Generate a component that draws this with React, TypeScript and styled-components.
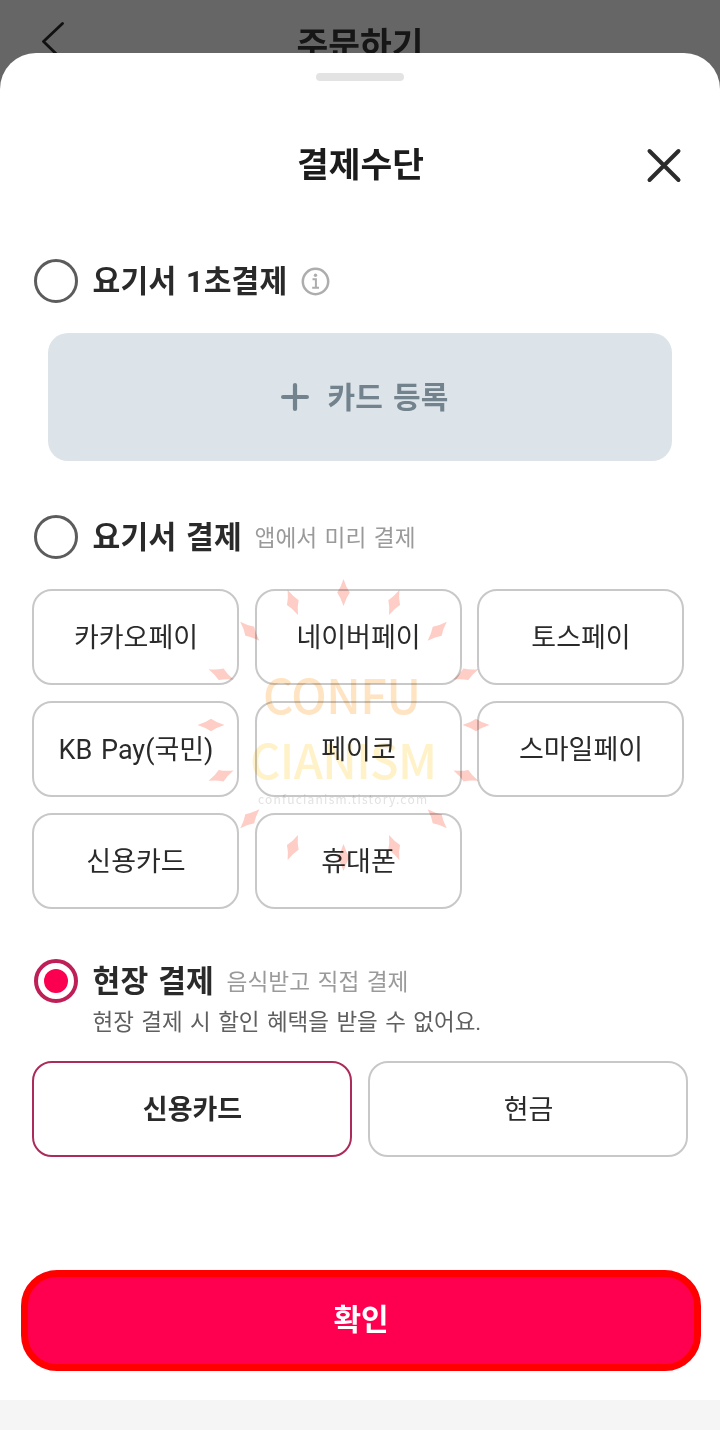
import React, { useState } from "react";
import styled, { createGlobalStyle } from "styled-components";

const GlobalStyle = createGlobalStyle`
  *, *::before, *::after { box-sizing: border-box; }
  body {
    margin: 0;
    background: #666666;
    font-family: Roboto, "Noto Sans CJK KR", sans-serif;
    color: #2a2a2a;
  }
  button { font: inherit; color: inherit; cursor: pointer; padding: 0; }
`;

const Screen = styled.div`
  width: 720px;
  height: 1430px;
  display: flex;
  flex-direction: column;
  overflow: hidden;
  background: #666666;
`;

const PageHeader = styled.header`
  display: grid;
  grid-template-columns: 80px 1fr 80px;
  height: 53px;
  flex: none;
  overflow: hidden;
`;

const BackButton = styled.button`
  border: 0;
  background: none;
  display: flex;
  align-items: flex-start;
  padding: 20px 0 0 38px;
`;

const PageTitle = styled.h1`
  margin: 0;
  padding-top: 20px;
  text-align: center;
  font-size: 34.5px;
  line-height: 50px;
  font-weight: 700;
  color: #161616;
`;

const Sheet = styled.section`
  flex: 1;
  display: flex;
  flex-direction: column;
  background: #ffffff;
  border-radius: 36px 36px 0 0;
`;

const Handle = styled.div`
  width: 88px;
  height: 8px;
  margin: 20px auto 0;
  border-radius: 4px;
  background: #e3e3e3;
`;

const SheetHeader = styled.div`
  display: grid;
  grid-template-columns: 80px 1fr 80px;
  align-items: center;
  height: 60px;
  margin-top: 54px;
`;

const SheetTitle = styled.h2`
  grid-column: 2;
  margin: 0;
  padding: 0 0 1px 1px;
  text-align: center;
  font-size: 34.5px;
  line-height: 50px;
  font-weight: 700;
  color: #1c1c1c;
`;

const CloseButton = styled.button`
  border: 0;
  background: none;
  display: flex;
  padding-left: 4px;
`;

const MethodRow = styled.div<{ $top: number }>`
  display: flex;
  align-items: center;
  height: 44px;
  margin: ${(p) => p.$top}px 34px 0;
`;

const Radio = styled.button<{ $checked?: boolean }>`
  flex: none;
  width: 44px;
  height: 44px;
  border-radius: 50%;
  border: ${(p) => (p.$checked ? "4.5px solid #bd1f56" : "3px solid #5c5c5c")};
  background: #ffffff;
  display: grid;
  place-items: center;

  &::after {
    content: "";
    width: 24px;
    height: 24px;
    border-radius: 50%;
    background: ${(p) => (p.$checked ? "#fb0050" : "transparent")};
  }
`;

const MethodName = styled.h3`
  margin: 0 0 0 14.5px;
  padding-top: 1px;
  font-size: 30.2px;
  line-height: 44px;
  font-weight: 700;
  letter-spacing: 0.2px;
  word-spacing: 2px;
  white-space: nowrap;
`;

const MethodHint = styled.span`
  margin-left: 12.5px;
  padding-top: 3px;
  font-size: 22.7px;
  line-height: 34px;
  word-spacing: 1.8px;
  color: #9a9a9a;
  white-space: nowrap;
`;

const InfoIcon = styled.svg`
  margin-left: 13px;
  margin-top: 1px;
`;

const Notice = styled.p`
  margin: 1px 0 0 92.5px;
  font-size: 22.5px;
  line-height: 36px;
  height: 34px;
  word-spacing: 1.8px;
  color: #5f5f5f;
`;

const AddCard = styled.button`
  flex: none;
  display: flex;
  align-items: center;
  justify-content: center;
  gap: 18px;
  height: 128px;
  margin: 30px 48px 0;
  padding-left: 10px;
  border: 0;
  border-radius: 20px;
  background: #dce3e9;
  color: #73838d;
  font-size: 30px;
  font-weight: 700;
  letter-spacing: 0.2px;
  word-spacing: 2.2px;
`;

const AddCardLabel = styled.span`
  padding-bottom: 4px;
`;

const PayArea = styled.div`
  position: relative;
  margin: 30px 36px 0 32px;
`;

const PayGrid = styled.div`
  display: grid;
  grid-template-columns: repeat(3, 207px);
  column-gap: 15.5px;
  row-gap: 16px;
`;

const SiteGrid = styled.div`
  display: grid;
  grid-template-columns: 1fr 1fr;
  gap: 16px;
  margin: 23px 32px 0;
`;

const Option = styled.button<{ $selected?: boolean }>`
  height: 96px;
  padding: 0 0 4px 1px;
  border: 2px solid ${(p) => (p.$selected ? "#ab2b5b" : "#c8c8c8")};
  border-radius: 20px;
  background: #ffffff;
  font-size: 27px;
  font-weight: ${(p) => (p.$selected ? 700 : 400)};
  word-spacing: 2px;
  white-space: nowrap;
`;

const Watermark = styled.svg`
  position: absolute;
  left: 160px;
  top: -14px;
  pointer-events: none;
  mix-blend-mode: multiply;
  font-family: "Noto Sans CJK KR", sans-serif;
`;

const Confirm = styled.button`
  flex: none;
  height: 101px;
  margin: 113px 19px 0 21px;
  padding-bottom: 8px;
  border: 7px solid #fe0000;
  border-radius: 36px;
  background: #ff0050;
  color: #ffffff;
  font-size: 30px;
  font-weight: 700;
`;

const NavBar = styled.div`
  height: 30px;
  margin-top: auto;
  background: #f5f5f5;
`;

const prepaid = ["카카오페이", "네이버페이", "토스페이", "KB Pay(국민)", "페이코", "스마일페이", "신용카드", "휴대폰"];
const onSite = ["신용카드", "현금"];
const rays = Array.from({ length: 16 }, (_, i) => i * 22.5);

export default function App() {
  const [method, setMethod] = useState(2);
  const [site, setSite] = useState("신용카드");

  return (
    <>
      <GlobalStyle />
      <Screen>
        <PageHeader>
          <BackButton aria-label="뒤로">
            <svg width="30" height="44" fill="none" stroke="#111" strokeWidth="2.8" strokeLinecap="round" strokeLinejoin="round">
              <path d="M24.5 3.5 5.5 21.5 24.5 40" />
            </svg>
          </BackButton>
          <PageTitle>주문하기</PageTitle>
        </PageHeader>
        <Sheet>
          <Handle />
          <SheetHeader>
            <SheetTitle>결제수단</SheetTitle>
            <CloseButton aria-label="닫기">
              <svg width="40" height="40" fill="none" stroke="#2c2c2c" strokeWidth="4" strokeLinecap="round">
                <path d="M5.5 6 34.5 35M34.5 6 5.5 35" />
              </svg>
            </CloseButton>
          </SheetHeader>

          <MethodRow $top={64}>
            <Radio $checked={method === 0} onClick={() => setMethod(0)} />
            <MethodName>요기서 1초결제</MethodName>
            <InfoIcon width="29" height="29" fill="none" stroke="#adadad" strokeWidth="2.5">
              <circle cx="14.5" cy="14.5" r="12.7" />
              <path d="M11.5 12.2h3.4v8.3M11.2 20.8h6.8" strokeWidth="2" />
              <circle cx="14.5" cy="8.3" r="1.7" fill="#adadad" stroke="none" />
            </InfoIcon>
          </MethodRow>
          <AddCard>
            <svg width="28" height="28" stroke="#73838d" strokeWidth="4.2" strokeLinecap="round">
              <path d="M2.1 14h23.8M14 2.1v23.8" />
            </svg>
            <AddCardLabel>카드 등록</AddCardLabel>
          </AddCard>

          <MethodRow $top={54}>
            <Radio $checked={method === 1} onClick={() => setMethod(1)} />
            <MethodName>요기서 결제</MethodName>
            <MethodHint>앱에서 미리 결제</MethodHint>
          </MethodRow>
          <PayArea>
            <PayGrid>
              {prepaid.map((name) => (
                <Option key={name}>{name}</Option>
              ))}
            </PayGrid>
            <Watermark width="310" height="310" viewBox="192 575 310 310">
              {rays.map((a) => (
                <path
                  key={a}
                  transform={`rotate(${a} 343.5 725)`}
                  d="M343.5 579Q346.1 587.3 349.8 592.5Q346.1 597.7 343.5 606Q340.9 597.7 337.2 592.5Q340.9 587.3 343.5 579Z"
                  fill="#fdcdc6"
                />
              ))}
              <text x="263" y="714" fontSize="47" fontWeight="500" textLength="158" fill="#ffe4c3">CONFU</text>
              <text x="250" y="779" fontSize="47" fontWeight="500" textLength="187" fill="#fff2c9">CIANISM</text>
              <text x="258" y="804" fontSize="12" textLength="169" fill="#e2e2e2">confucianism.tistory.com</text>
            </Watermark>
          </PayArea>

          <MethodRow $top={50}>
            <Radio $checked={method === 2} onClick={() => setMethod(2)} />
            <MethodName>현장 결제</MethodName>
            <MethodHint>음식받고 직접 결제</MethodHint>
          </MethodRow>
          <Notice>현장 결제 시 할인 혜택을 받을 수 없어요.</Notice>
          <SiteGrid>
            {onSite.map((name) => (
              <Option key={name} $selected={site === name} onClick={() => setSite(name)}>
                {name}
              </Option>
            ))}
          </SiteGrid>

          <Confirm>확인</Confirm>
          <NavBar />
        </Sheet>
      </Screen>
    </>
  );
}
